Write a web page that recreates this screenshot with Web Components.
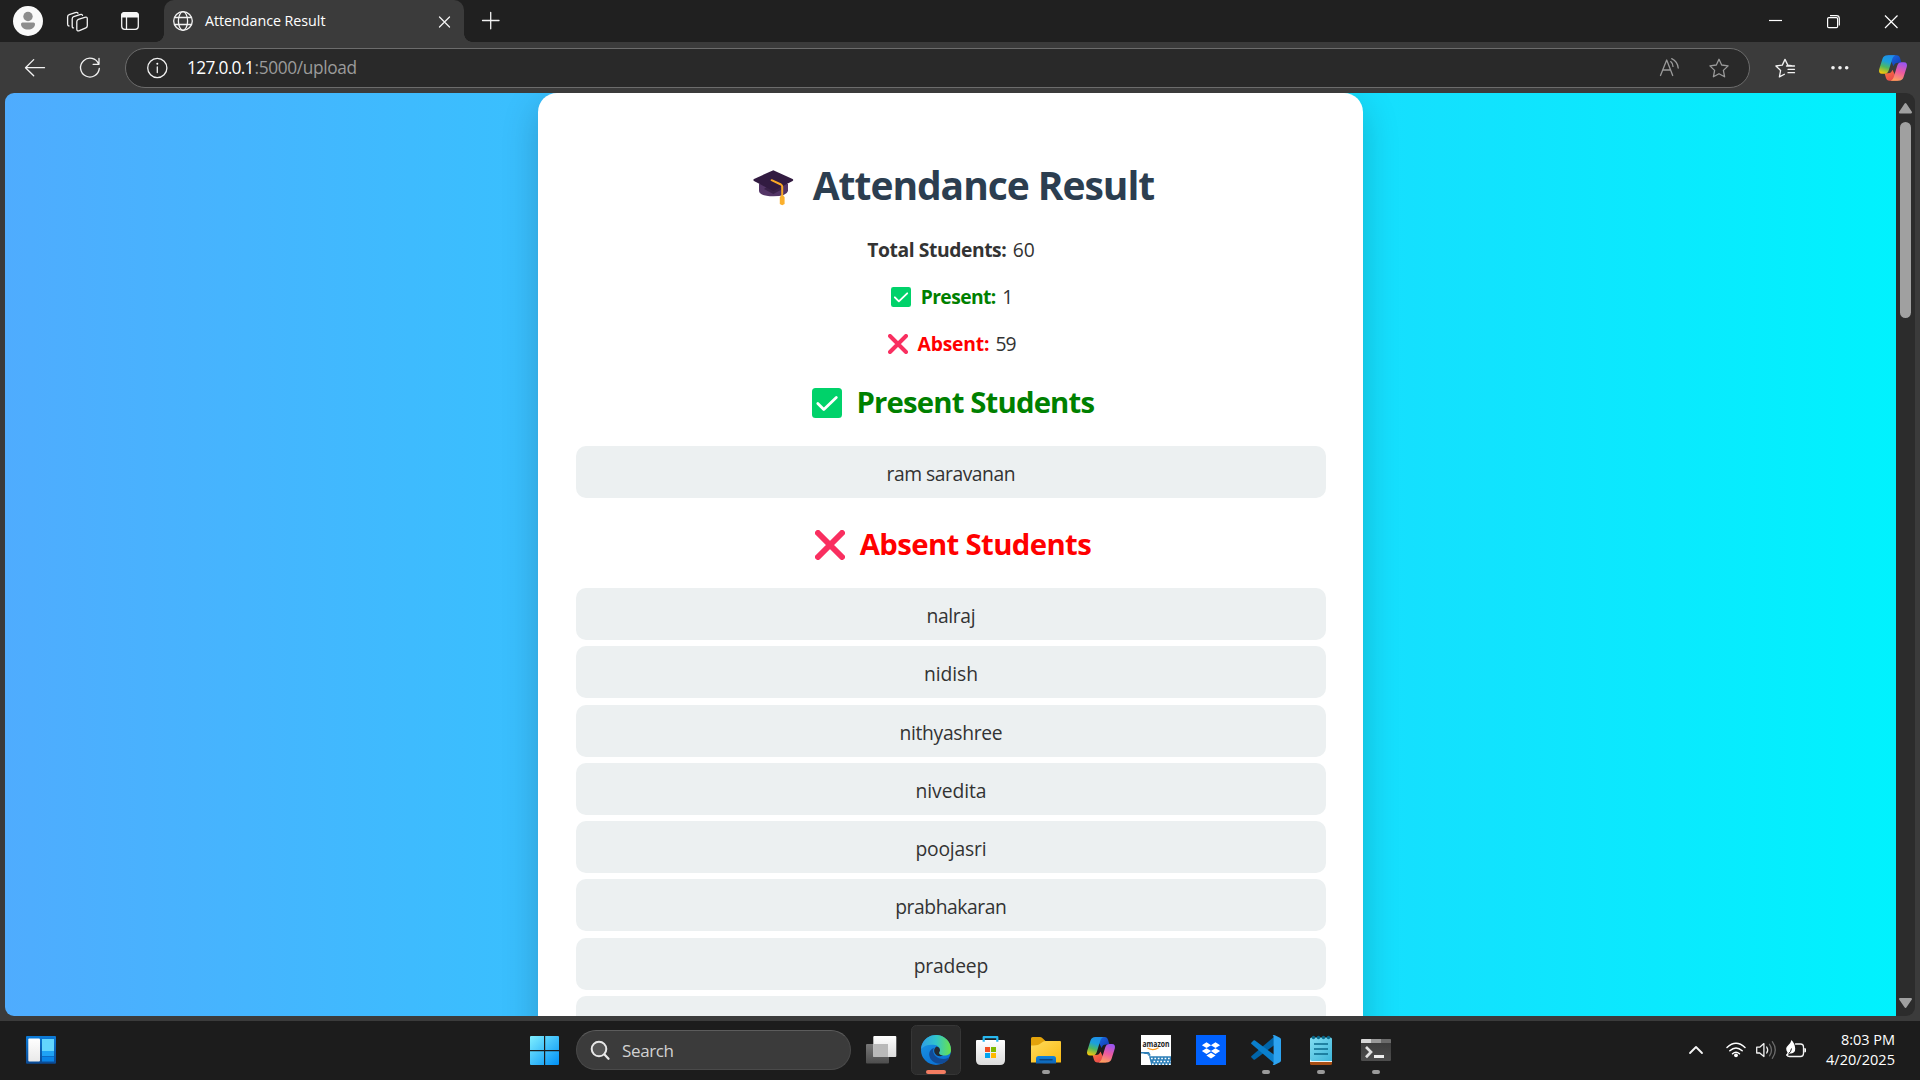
<!DOCTYPE html>
<html lang="en">
<head>
<meta charset="utf-8">
<title>Attendance Result</title>
<style>
html,body{margin:0;height:100%;background:#202020;overflow:hidden}
body{font-family:"Open Sans","Noto Sans",sans-serif;color:#333}
</style>
</head>
<body>
<desktop-screen></desktop-screen>
<script>
const copilot = (x, y) => `<defs>
<linearGradient id="c1" x1="0.6" y1="0" x2="0.3" y2="1"><stop offset="0" stop-color="#1f8fe8"/><stop offset=".35" stop-color="#1ba0dc"/><stop offset=".65" stop-color="#4fb85f"/><stop offset="1" stop-color="#f3c70b"/></linearGradient>
<linearGradient id="c2" x1="0.6" y1="0" x2="0.3" y2="1"><stop offset="0" stop-color="#9b55f0"/><stop offset=".5" stop-color="#ee5a9e"/><stop offset="1" stop-color="#fda45c"/></linearGradient>
<linearGradient id="c3" x1="0" y1="0" x2="1" y2="1"><stop offset="0" stop-color="#1c6fe6"/><stop offset="1" stop-color="#1137b0"/></linearGradient>
<linearGradient id="c4" x1="0" y1="0" x2="1" y2="1"><stop offset="0" stop-color="#fb7a3c"/><stop offset="1" stop-color="#e33a52"/></linearGradient></defs>
<g transform="translate(${x} ${y})">
<path fill="url(#c3)" d="M9 0h8.500c2 0 3 1 3.600 3l1.300 4.500h-3c-3 0-4 1-4.800 3.500z"/>
<path fill="url(#c4)" d="M19 25.500h-8.500c-2 0-3-1-3.600-3L5.600 18h3c3 0 4-1 4.800-3.500z"/>
<path fill="url(#c1)" d="M8.500 0h8c-2.200.6-2.800 2.300-3.500 4.500l-3.200 10.500c-.8 2.500-2 3.500-4.500 3.500H3c-2.500 0-3.500-2-2.800-4.500L3.500 3.500C4.200 1.200 5.800 0 8.500 0z"/>
<path fill="url(#c2)" d="M19.500 25.500h-8c2.200-.6 2.800-2.300 3.500-4.500l3.200-10.500c.8-2.500 2-3.500 4.500-3.500H25c2.500 0 3.500 2 2.800 4.500L24.500 22c-.7 2.300-2.300 3.500-5 3.500z"/></g>`;
const dot = x => `<rect x="${x}" y="1070" width="8" height="4" rx="2" fill="#9a9a9a"/>`;
const W = 'fill="none" stroke="#f2f2f2" stroke-width="1.300" stroke-linecap="round" stroke-linejoin="round"';
const G = 'fill="none" stroke="#9a9a9a" stroke-width="1.300" stroke-linecap="round" stroke-linejoin="round"';

/* name: [x, y, width, height, markup] — each glyph is drawn in the coordinates of its bar */
const ICONS = {
  profile:[0,0,50,42,`<circle cx="28" cy="21" r="15" fill="#fafafa"/><circle cx="28" cy="16.500" r="4.700" fill="#8d8d8d"/><path d="M22.500 22.500h11q1.500 0 1.500 1.500c0 3.500-3 5.600-7 5.600s-7-2.100-7-5.600q0-1.500 1.500-1.500z" fill="#8d8d8d"/>`],
  workspaces:[50,0,55,42,`<g ${W}><path d="M78.300 19.400l6.500-2.100q2.500-.8 2.500 1.500v7q0 1.500-1.400 2l-6.500 2.800q-2.600 1-2.600-1.300v-7.500q0-1.800 1.500-2.400z"/><path d="M73.500 27.800q-1.300.2-1.300-1.600v-7.300q0-1.700 1.500-2.200l6.200-2.100q2.100-.7 2.600.8"/><path d="M69 26q-1.400 0-1.400-1.700v-7.300q0-1.800 1.600-2.300l6.100-2.100q2-.6 2.700.6"/></g>`],
  tabs:[105,0,59,42,`<rect x="121.700" y="12.700" width="16.600" height="16.600" rx="3" ${W}/><path d="M121 17.500V16q0-4 4-4h10q4 0 4 4v1.500z" fill="#f5f5f5"/><path d="M126.500 17v12" ${W}/>`],
  globe:[164,0,41,42,`<g ${W}><circle cx="183" cy="21" r="9.300"/><ellipse cx="183" cy="21" rx="4.600" ry="9.300"/><path d="M174.700 17.500h16.600M174.700 24.500h16.600"/></g>`],
  tabclose:[426,0,38,42,`<path d="M439.500 17l10 10m0-10l-10 10" ${W}/>`],
  plus:[464,0,60,42,`<path d="M482.500 20.500h16.500M490.700 12.300v16.500" ${W}/>`],
  min:[1740,0,58,42,`<path d="M1769 20.500h13" stroke="#fff" stroke-width="1.200"/>`],
  restore:[1798,0,60,42,`<path d="M1830 15.600h6.500q2.800 0 2.800 2.800v7" fill="none" stroke="#fff" stroke-width="1.200"/><rect x="1827.600" y="17.600" width="10" height="10" rx="1.200" fill="none" stroke="#fff" stroke-width="1.200"/>`],
  close:[1858,0,62,42,`<path d="M1885 15.500l12.500 12.500m0-12.500l-12.500 12.500" stroke="#fff" stroke-width="1.200"/>`],
  back:[0,42,60,51,`<path d="M44.500 67.700H25.800M33.700 59.600l-8.200 8.100 8.200 8.100" ${W}/>`],
  refresh:[60,42,65,51,`<path d="M98.700 64.200a9.400 9.400 0 1 0 .6 4.200M99 58.500v5.800h-5.900" ${W}/>`],
  info:[126,49,61,38,`<circle cx="157.300" cy="68" r="9.600" ${W}/><path d="M157.300 67v5.500" ${W}/><circle cx="157.300" cy="63.800" r="1" fill="#fff"/>`],
  read:[1640,49,50,38,`<g ${G}><path d="M1660.500 75.500l6.200-15.500 6 15.500M1662.800 70h7.700"/><path d="M1670.700 61.600q2.300 1.800 2.300 4.800M1671.700 58.700q5.800 2.800 6.500 9.300"/></g>`],
  star:[1690,49,59,38,`<path d="M1719 59.300l2.700 5.700 6.400.9-4.700 4.500 1.200 6.400-5.600-3.100-5.600 3.100 1.200-6.400-4.700-4.500 6.400-.9z" ${G}/>`],
  favs:[1750,42,64,51,`<path d="M1786.500 66h8M1788 69.300h6.500M1788 72.700h6.500M1791.500 65.700l-3.700-.6-2.800-5.700-2.700 5.700-6.400.9 4.700 4.500-1.200 6.400 5-2.700" ${W}/>`],
  dots:[1814,42,54,51,`<g fill="#f2f2f2"><circle cx="1833" cy="67.800" r="1.800"/><circle cx="1840" cy="67.800" r="1.800"/><circle cx="1846.700" cy="67.800" r="1.800"/></g>`],
  copilot:[1868,42,52,51,copilot(1879,55.200)],
  cap:[754,170,41,36,`<path d="M760 184v7q1 5.300 14.300 5.300T789 191v-7z" fill="#533566"/><path d="M765 189l9.300 5 9.300-5-9.300-7z" fill="#3a2249"/><path d="M774.300 170.200l19.300 8.800q1.300 1 0 2.100l-19.300 10-19.300-10q-1.300-1 0-2.100z" fill="#321b41"/><path d="M772.600 180.200l9.300 4.300q1.300.8 1.300 2v9" fill="none" stroke="#f9a825" stroke-width="2" stroke-linecap="round"/><path d="M783.200 194.500l2.400 2.500v7l-2.400 1.200-2.400-1.200v-7z" fill="#fbb02d"/>`],
  check:[0,0,30,30,`<rect width="30" height="30" rx="3.500" fill="#00d26a"/><path d="M5.800 15.500l6 6L24.300 9.500" fill="none" stroke="#fff" stroke-width="2.800" stroke-linecap="round" stroke-linejoin="round"/>`],
  cross:[0,0,30,30,`<path d="M3 3l24 24M27 3L3 27" stroke="#f92f60" stroke-width="6" stroke-linecap="round"/>`],
  up:[1896,93,19,29,`<path d="M1905.500 104l5.500 8.400h-11z" fill="#a0a0a0" stroke="#a0a0a0" stroke-width="2" stroke-linejoin="round"/>`],
  down:[1896,992,19,23,`<path d="M1905.500 1006l5.500-8h-11z" fill="#a0a0a0" stroke="#a0a0a0" stroke-width="2" stroke-linejoin="round"/>`],
  widgets:[0,1021,500,59,`<defs><linearGradient id="a" x2="0" y2="1"><stop stop-color="#0c7bd8"/><stop offset="1" stop-color="#0b4a94"/></linearGradient><linearGradient id="b" x2="0" y2="1"><stop stop-color="#fff"/><stop offset="1" stop-color="#e9e9e9"/></linearGradient></defs><rect x="26" y="1036" width="30" height="27.700" rx="1" fill="url(#a)"/><rect x="28.300" y="1038.500" width="11.700" height="23" rx="1" fill="url(#b)"/><path d="M42 1039h12v12H42z" fill="#63d6fd"/><path d="M42 1051h12v5H42z" fill="#1fa3f5"/><path d="M42 1056.500h12v5H42z" fill="#0a84e6"/>`],
  start:[500,1021,76,59,`<defs><linearGradient id="a" gradientUnits="userSpaceOnUse" x1="530" y1="1036" x2="559" y2="1065"><stop stop-color="#7fefff"/><stop offset="1" stop-color="#0090f5"/></linearGradient></defs><path fill="url(#a)" d="M531 1036h13v14h-14v-13q0-1 1-1zM545.200 1036h12.800q1 0 1 1v13h-13.800zM530 1051.200h14v13.800h-13q-1 0-1-1zM545.200 1051.200H559v12.800q0 1-1 1h-12.800z"/>`],
  search:[577,1031,45,38,`<circle cx="599" cy="1049" r="7.300" fill="#555" stroke="#e8e8e8" stroke-width="2"/><path d="M604.500 1054.500l4 4.200" stroke="#e8e8e8" stroke-width="2.300" stroke-linecap="round"/>`],
  taskview:[851,1021,60,59,`<defs><linearGradient id="a" x2="0" y2="1"><stop stop-color="#777"/><stop offset="1" stop-color="#4d4d4d"/></linearGradient><linearGradient id="b" x2="0" y2="1"><stop stop-color="#fff"/><stop offset="1" stop-color="#dcdcdc"/></linearGradient></defs><rect x="866" y="1044" width="23" height="19.500" rx="1" fill="url(#a)"/><rect x="873.300" y="1036" width="23" height="21" rx="1" fill="url(#b)"/><path d="M873.300 1044H888v13h-14.700z" fill="#b9b9b9"/>`],
  edge:[911,1021,50,59,`<defs><linearGradient id="a" x1="0" x2="1"><stop stop-color="#2f9ee8"/><stop offset=".5" stop-color="#31c5cb"/><stop offset="1" stop-color="#69e24b"/></linearGradient><linearGradient id="b" x2=".6" y2="1"><stop stop-color="#1d9be6"/><stop offset="1" stop-color="#0a70d4"/></linearGradient></defs><rect x="911.500" y="1025.500" width="49" height="49" rx="5" fill="#2b2b2b" stroke="#363636"/><circle cx="936" cy="1050" r="15" fill="url(#b)"/><path d="M921.200 1047.500a15 15 0 0 1 29.800 2.500c0 4-3 5.500-6.500 5.500-4 0-5.500-1.200-5.500-2.600 0-1 .9-1.300.9-3 0-2.600-2.500-4.900-6.300-5.200-5.500-.4-10 1-12.400 4.300z" fill="url(#a)"/><path d="M934 1048c-3.300 1-5.200 4-4.700 7.500.8 5.500 6.500 8.800 12.500 8.200 3-.9 5.500-2.700 7.200-5 .4-.8-.2-1.200-.9-.8-3.300 1.600-8 1.300-11-.7-3.600-2.300-5-6.300-3.100-9.200z" fill="#114b97"/><path d="M936.500 1046.600c2.200.5 3.500 1.900 3.500 3.700 0 1-.9 1.500-.9 2.700 0 1.400 1.700 2.400 4 2.600-3.500 1.600-7.100.2-8.500-2.600-1.100-2.400-.2-5 1.900-6.400z" fill="#252a30"/><rect x="926" y="1070" width="20" height="4" rx="2" fill="#f47d62"/>`],
  store:[961,1021,60,59,`<defs><linearGradient id="a" x2="0" y2="1"><stop stop-color="#fff"/><stop offset="1" stop-color="#dcdcdc"/></linearGradient></defs><path d="M983.700 1041v-3.800h13.600v3.800" fill="none" stroke="#28b8ef" stroke-width="2.200" stroke-linejoin="round"/><path d="M976 1041q0-1 1-1h27q1 0 1 1v19q0 5-5 5h-19q-5 0-5-5z" fill="url(#a)"/><path d="M983.700 1040v1.800M997.300 1040v1.800" stroke="#28b8ef" stroke-width="2.200"/><path d="M985 1047h5v5h-5z" fill="#f25022"/><path d="M991 1047h5v5h-5z" fill="#7fba00"/><path d="M985 1053h5v5h-5z" fill="#00a4ef"/><path d="M991 1053h5v5h-5z" fill="#ffb900"/>`],
  folder:[1021,1021,50,59,`<defs><linearGradient id="a" x2="1" y2="1"><stop stop-color="#ffdc5c"/><stop offset="1" stop-color="#fab912"/></linearGradient><linearGradient id="b" x2="0" y2="1"><stop stop-color="#0f84dd"/><stop offset="1" stop-color="#1064b4"/></linearGradient></defs><path d="M1031 1047v-8.500q0-1.500 1.500-1.500h7.500q1.200 0 2 .8l3.500 3.200v6z" fill="#e3a30b"/><path d="M1031 1045.500q6 0 8-1l4-2.800q1-.7 2.500-.7h14.500q1 0 1 1v20.500h-30z" fill="url(#a)"/><path d="M1036 1063.500v-5q0-2.500 2.500-2.500h15q2.500 0 2.500 2.500v5z" fill="url(#b)"/><path d="M1040 1059.700h12" stroke="#0a4580" stroke-width="1.500" stroke-linecap="round"/>${dot(1042)}`],
  copilot2:[1071,1021,60,59,copilot(1087,1037)],
  amazon:[1131,1021,50,59,`<path d="M1141 1035h30v30h-30z" fill="#fff"/><text x="1142.500" y="1046.500" font-family="Open Sans" font-weight="700" font-size="8.300" textLength="27" lengthAdjust="spacingAndGlyphs" fill="#222">amazon</text><path d="M1147.500 1048q5.500 3.300 11-.3" fill="none" stroke="#f59a23" stroke-width="1.200"/><path d="M1143 1053h5.200l3 12H1171v-8.700h-21.500" fill="#2d7fb8"/><path d="M1141 1052.700h7.500l1.500 3" fill="none" stroke="#2d7fb8" stroke-width="1.600"/><path d="M1143 1054h4.500l3 11H1143z" fill="#fff"/><path d="M1151 1058.500h20M1153.500 1061.500h17.500M1152 1064.200h19" stroke="#fff" stroke-width="1.500" stroke-dasharray="1.700 1.700"/>`],
  dropbox:[1181,1021,55,59,`<path d="M1196 1035h30v30h-30z" fill="#0061fe"/><path fill="#fff" d="M1206.500 1042.300l4.600 2.900-4.600 2.900-4.600-2.900zM1215.500 1042.300l4.600 2.900-4.600 2.900-4.600-2.900zM1206.500 1048.200l4.600 2.900-4.600 2.900-4.600-2.900zM1215.500 1048.200l4.600 2.900-4.600 2.900-4.600-2.900zM1211 1052.700l4.600 2.900-4.600 3-4.600-3z"/>`],
  vscode:[1236,1021,55,59,`<path d="M1274.500 1036.500v8.500l-19.500 14.600q-.8.500-1.500-.1l-2-1.900q-.8-.8 0-1.600z" fill="#0065a9"/><path d="M1274.500 1063.500v-8.500l-19.500-14.600q-.8-.5-1.500.1l-2 1.900q-.8.800 0 1.600z" fill="#0a7fcc"/><path d="M1272.600 1064.700q1.200.5 2.300 0l5-2.500q1.100-.5 1.100-1.800v-20.800q0-1.300-1.100-1.800l-5-2.500q-1.100-.5-2.300 0 1 .6 1 1.800v25.800q0 1.200-1 1.800z" fill="#2da3f0"/>${dot(1262)}`],
  notepad:[1291,1021,60,59,`<defs><linearGradient id="a" x2="1" y2="1"><stop stop-color="#83ddf2"/><stop offset="1" stop-color="#3db5d9"/></linearGradient></defs><path d="M1310 1060h22v3.500q0 1.500-1.500 1.500h-19q-1.500 0-1.500-1.500z" fill="#a84f14"/><path d="M1310 1059h22v3h-22z" fill="#f4f4f4"/><path d="M1310 1039q0-1.500 1.500-1.500h19q1.500 0 1.500 1.500v22h-20q-2 0-2-2z" fill="url(#a)"/><g fill="#0b6a8c"><circle cx="1313.500" cy="1037.500" r="1.700"/><circle cx="1318.500" cy="1037.500" r="1.700"/><circle cx="1323.500" cy="1037.500" r="1.700"/><circle cx="1328.500" cy="1037.500" r="1.700"/></g><path d="M1314 1044h14M1314 1049h14M1314 1054h14" stroke="#0b6a8c" stroke-width="1.700"/>${dot(1317)}`],
  terminal:[1351,1021,60,59,`<defs><linearGradient id="a" x2="0" y2="1"><stop stop-color="#3a3a3a"/><stop offset="1" stop-color="#4d4d4d"/></linearGradient></defs><rect x="1361" y="1039" width="30" height="22" rx="1.200" fill="url(#a)"/><path d="M1361 1043v-3q0-1 1-1h9v4z" fill="#d6d6d6"/><path d="M1371 1039h10v4h-10z" fill="#999"/><path d="M1381 1039h9q1 0 1 1v3h-10z" fill="#6b6b6b"/><path d="M1366 1047l5 5-5 5.300" fill="none" stroke="#e0e0e0" stroke-width="2.700"/><path d="M1374 1055h10v3h-10z" fill="#eee"/>${dot(1372)}`],
  chevron:[1670,1021,50,59,`<path d="M1690 1053l6-6 6 6" fill="none" stroke="#f5f5f5" stroke-width="1.800" stroke-linecap="round" stroke-linejoin="round"/>`],
  wifi:[1720,1021,31,59,`<g fill="none" stroke="#fff" stroke-width="1.500" stroke-linecap="round"><path d="M1727 1047.500q9-8.500 18 0M1729.800 1050.800q6.200-5.600 12.400 0M1732.500 1053.700q3.500-3 7 0"/></g><circle cx="1736" cy="1055.300" r="1.900" fill="#fff"/>`],
  volume:[1751,1021,30,59,`<path d="M1756.700 1047.200h3l4.200-3.600v13l-4.200-3.600h-3z" ${W}/><path d="M1766.700 1047q2 3 0 6" ${W}/><path d="M1769.500 1044.300q4 5.700 0 11.500M1772.300 1041.700q6 8.300 0 16.600" fill="none" stroke="#6b6b6b" stroke-width="1.300" stroke-linecap="round"/>`],
  battery:[1781,1021,40,59,`<path d="M1795.500 1044h5q3 0 3 3v6.500q0 3-3 3h-11q-2 0-2.600-1.500" ${W}/><path d="M1804.300 1048q1.700 0 1.700 1v2.500q0 1-1.700 1z" fill="#fff"/><path d="M1791.500 1040q3.500 3.800 3.700 8.500.2 4.700-4.200 5h-1.500l-2.600 2.400-.8-.8 1.500-2.400q-3-4.700.4-7.200 2.500-1.700 3.500-5.500z" fill="#fff"/><path d="M1788.500 1053.500q2.500-1 3-5M1794.500 1053.500h2.500" fill="none" stroke="#1c1c1c" stroke-width="1"/>`]
};

const define = (name, html, ready) => {
  const t = document.createElement('template');
  t.innerHTML = html;
  customElements.define(name, class extends HTMLElement {
    constructor() { super(); this.attachShadow({mode:'open'}).append(t.content.cloneNode(true)); }
    connectedCallback() { if (ready) ready(this); }
  });
};

/* svg glyph; "size" overrides the natural width */
define('ui-icon', `<style>:host{display:block;flex:none}svg{display:block}</style><div></div>`, el => {
  const [x, y, w, h, body] = ICONS[el.getAttribute('name')];
  const size = +el.getAttribute('size') || w;
  el.shadowRoot.querySelector('div').innerHTML =
    `<svg xmlns="http://www.w3.org/2000/svg" width="${size}" height="${size * h / w}" viewBox="${x} ${y} ${w} ${h}">${body}</svg>`;
});

/* single-line label tracked to a given width */
define('fit-label', `<style>:host{display:block;flex:none;white-space:pre}span{display:inline-block}</style><span><slot></slot></span>`, el => {
  const target = +el.getAttribute('width'), span = el.shadowRoot.querySelector('span');
  const gap = (target - span.getBoundingClientRect().width) / (el.textContent.length - 1 || 1);
  if (el.textContent.length < 2) return;
  span.style.letterSpacing = gap + 'px';
  span.style.marginRight = -gap + 'px';
});

define('tab-strip', `<style>
:host{display:flex;height:42px;background:#202020;color:#fff}
.tab{display:flex;width:300px;background:#3b3b3b;border-radius:10px 10px 0 0;font-size:14.300px;line-height:41px}
.foot{width:8px;height:8px;align-self:flex-end;margin-left:-8px;background:radial-gradient(circle at 0 0,#202020 7.500px,#3b3b3b 8px)}
.foot.r{margin:0 -8px 0 0;background:radial-gradient(circle at 100% 0,#202020 7.500px,#3b3b3b 8px)}
.grow{flex:1}
</style>
<ui-icon name="profile"></ui-icon><ui-icon name="workspaces"></ui-icon><ui-icon name="tabs"></ui-icon>
<div class="foot"></div>
<div class="tab"><ui-icon name="globe"></ui-icon><fit-label width="120.500">Attendance Result</fit-label><div class="grow"></div><ui-icon name="tabclose"></ui-icon></div>
<div class="foot r"></div>
<ui-icon name="plus"></ui-icon><div class="grow"></div>
<ui-icon name="min"></ui-icon><ui-icon name="restore"></ui-icon><ui-icon name="close"></ui-icon>`);

define('address-row', `<style>
:host{display:flex;height:51px;background:#3b3b3b}
.bar{display:flex;box-sizing:border-box;width:1625px;height:40px;margin-top:6px;border:1px solid #6c6c6c;border-radius:20px;background:#292929;font-size:17.300px;line-height:38px;color:#9b9b9b}
.host{color:#fff}.grow{flex:1}
</style>
<ui-icon name="back"></ui-icon><ui-icon name="refresh"></ui-icon>
<div class="bar"><ui-icon name="info"></ui-icon><fit-label class="host" width="67.500">127.0.0.1</fit-label><fit-label width="102.500">:5000/upload</fit-label><div class="grow"></div><ui-icon name="read"></ui-icon><ui-icon name="star"></ui-icon></div>
<ui-icon name="favs"></ui-icon><ui-icon name="dots"></ui-icon><ui-icon name="copilot"></ui-icon>`);

define('stat-line', `<style>
:host{display:flex;justify-content:center;align-items:center;height:28px;line-height:28px;font-size:19.300px;margin-top:19px;color:#333}
::slotted(b){font-weight:700}
</style><slot></slot>`);

define('section-title', `<style>
:host{display:flex;justify-content:center;height:40px;line-height:40px;font-size:29.300px;font-weight:700;padding-left:5px}
</style><slot></slot>`);

define('name-row', `<style>
:host{display:flex;justify-content:center;height:52px;line-height:56.500px;border-radius:10px;background:#ecf0f1;font-size:19.300px;color:#333;flex:none}
</style><slot></slot>`);

define('attendance-card', `<style>
:host{display:flex;flex-direction:column;box-sizing:border-box;width:825px;height:1100px;padding:62px 37px 0 38px;border-radius:19px;background:#fff;box-shadow:0 12.500px 37.500px rgba(0,0,0,.2)}
.h1{display:flex;justify-content:center;gap:19px;height:60px;line-height:60px;font-size:39px;font-weight:700;color:#2c3e50;padding-left:6px}
.h1 ui-icon{margin-top:15px}
.first{margin-top:21px}
b{font-weight:700}
.g{color:#008000}.r{color:#f00}
.st{padding-left:2.500px}
.st ui-icon{margin-right:9.500px}
.v{margin-left:6px}
section-title{margin:24px 0}
section-title.two{margin-top:26px}
section-title ui-icon{margin:5.500px 14.500px 0 0}
ul{display:flex;flex-direction:column;gap:6.280px;margin:0;padding:0}
</style>
<div class="h1"><ui-icon name="cap"></ui-icon><fit-label width="342.500">Attendance Result</fit-label></div>
<stat-line class="first"><b><fit-label width="139.500">Total Students:</fit-label></b><fit-label class="v" width="22">60</fit-label></stat-line>
<stat-line class="st"><ui-icon name="check" size="20"></ui-icon><b class="g"><fit-label width="75.500">Present:</fit-label></b><fit-label class="v" width="10">1</fit-label></stat-line>
<stat-line class="st"><ui-icon name="cross" size="20"></ui-icon><b class="r"><fit-label width="72">Absent:</fit-label></b><fit-label class="v" width="21">59</fit-label></stat-line>
<section-title class="g"><ui-icon name="check" size="30"></ui-icon><fit-label width="238.500">Present Students</fit-label></section-title>
<ul><name-row><fit-label width="129">ram saravanan</fit-label></name-row></ul>
<section-title class="r two"><ui-icon name="cross" size="30"></ui-icon><fit-label width="232">Absent Students</fit-label></section-title>
<ul>
<name-row><fit-label width="49">nalraj</fit-label></name-row>
<name-row><fit-label width="54">nidish</fit-label></name-row>
<name-row><fit-label width="103">nithyashree</fit-label></name-row>
<name-row><fit-label width="71">nivedita</fit-label></name-row>
<name-row><fit-label width="71">poojasri</fit-label></name-row>
<name-row><fit-label width="111.500">prabhakaran</fit-label></name-row>
<name-row><fit-label width="74.500">pradeep</fit-label></name-row>
<name-row><fit-label width="103">pragadeesh</fit-label></name-row>
</ul>`);

define('scroll-track', `<style>
:host{display:flex;flex-direction:column;width:19px;background:#2c2c2c}
.thumb{width:11px;height:196px;margin-left:4px;border-radius:5.500px;background:#a0a0a0}.grow{flex:1}
</style><ui-icon name="up"></ui-icon><div class="thumb"></div><div class="grow"></div><ui-icon name="down"></ui-icon>`);

define('page-view', `<style>
:host{display:block;box-sizing:border-box;height:928px;padding:0 5px 5px;background:#3b3b3b}
.frame{display:flex;height:922.600px;border-radius:9px;overflow:hidden}
.body{display:flex;justify-content:center;width:1891px;height:923px;overflow:hidden;background:linear-gradient(to right,#4facfe,#00f2fe)}
</style><div class="frame"><div class="body"><attendance-card></attendance-card></div><scroll-track></scroll-track></div>`);

define('task-bar', `<style>
:host{display:flex;height:59px;background:#1c1c1c;color:#fff}
.search{display:flex;box-sizing:border-box;width:275px;height:40px;margin-top:9px;border:1px solid #4a4a4a;border-top-color:#5c5c5c;border-radius:20px;background:#3b3b3b;color:#d2d2d2;font-size:17px;line-height:40px}
.clock{display:flex;flex-direction:column;align-items:flex-end;width:74px;padding-top:9px;font-size:14.500px;line-height:20px}
.end{width:25px}
.grow{flex:1}
</style>
<ui-icon name="widgets"></ui-icon><ui-icon name="start"></ui-icon>
<div class="search"><ui-icon name="search"></ui-icon><fit-label width="52">Search</fit-label></div>
<ui-icon name="taskview"></ui-icon><ui-icon name="edge"></ui-icon><ui-icon name="store"></ui-icon><ui-icon name="folder"></ui-icon><ui-icon name="copilot2"></ui-icon><ui-icon name="amazon"></ui-icon><ui-icon name="dropbox"></ui-icon><ui-icon name="vscode"></ui-icon><ui-icon name="notepad"></ui-icon><ui-icon name="terminal"></ui-icon>
<div class="grow"></div>
<ui-icon name="chevron"></ui-icon><ui-icon name="wifi"></ui-icon><ui-icon name="volume"></ui-icon><ui-icon name="battery"></ui-icon>
<div class="clock"><fit-label width="54">8:03 PM</fit-label><fit-label width="69">4/20/2025</fit-label></div>
<div class="end"></div>`);

define('desktop-screen', `<style>
:host{display:flex;flex-direction:column;width:1920px;height:1080px;overflow:hidden}
</style><tab-strip></tab-strip><address-row></address-row><page-view></page-view><task-bar></task-bar>`);
</script>
</body>
</html>
